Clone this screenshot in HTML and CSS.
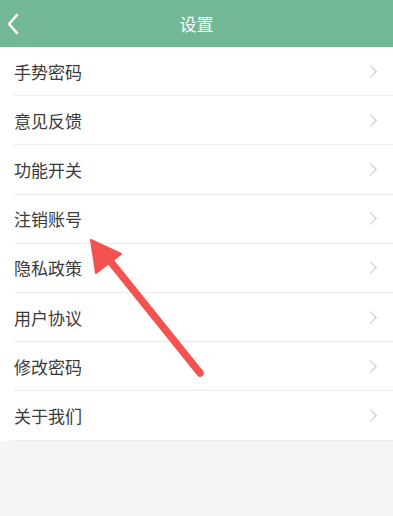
FILE: index.html
```html
<!DOCTYPE html>
<html lang="zh-CN">
<head>
  <meta charset="UTF-8" />
  <title>设置</title>
  <link rel="stylesheet" href="styles.css">
</head>
<body>

  <div class="header">
    <span class="back">
      <svg width="14" height="22" viewBox="0 0 14 22"><path d="M11 2 L3 11 L11 20" fill="none" stroke="#fff" stroke-width="2.6" stroke-linecap="round" stroke-linejoin="round"/></svg>
    </span>
    <span class="title">设置</span>
  </div>

  <div class="list">
    <div class="row"><span>手势密码</span><i class="chev"></i></div>
    <div class="row"><span>意见反馈</span><i class="chev"></i></div>
    <div class="row"><span>功能开关</span><i class="chev"></i></div>
    <div class="row"><span>注销账号</span><i class="chev"></i></div>
    <div class="row"><span>隐私政策</span><i class="chev"></i></div>
    <div class="row"><span>用户协议</span><i class="chev"></i></div>
    <div class="row"><span>修改密码</span><i class="chev"></i></div>
    <div class="row"><span>关于我们</span><i class="chev"></i></div>
  </div>

  <svg class="arrow" width="393" height="516" viewBox="0 0 393 516">
    <line x1="200" y1="373" x2="106" y2="256" stroke="#f4524f" stroke-width="7.5" stroke-linecap="round"/>
    <polygon points="91,240 96,273 121,254" fill="#f4524f" stroke="#f4524f" stroke-width="2" stroke-linejoin="round"/>
  </svg>

</body>
</html>
```

FILE: styles.css
```css
* {
  box-sizing: border-box;
}

body {
  margin: 0;
  background: #f5f5f5;
  font-family: "Noto Sans CJK SC", "Noto Sans", sans-serif;
  color: #3a3a3a;
  position: relative;
  height: 516px;
  overflow: hidden;
}

.header {
  height: 47px;
  background: #72b897;
  display: flex;
  align-items: center;
  justify-content: center;
  position: relative;
}

.header .back {
  position: absolute;
  left: 6px;
  top: 13px;
}

.header .title {
  color: #fff;
  font-size: 17px;
  margin-top: -1px;
}

.list {
  background: #fff;
  padding-left: 14px;
}

.row {
  height: 49.2px;
  display: flex;
  align-items: center;
  justify-content: space-between;
  border-bottom: 1px solid #ebebeb;
  font-size: 17px;
  padding-right: 14px;
}

.chev {
  width: 9px;
  height: 9px;
  border-top: 1.5px solid #c4c4c4;
  border-right: 1.5px solid #c4c4c4;
  transform: rotate(45deg);
  margin-right: 4px;
}

.arrow {
  position: absolute;
  left: 0;
  top: 0;
  pointer-events: none;
}
```
